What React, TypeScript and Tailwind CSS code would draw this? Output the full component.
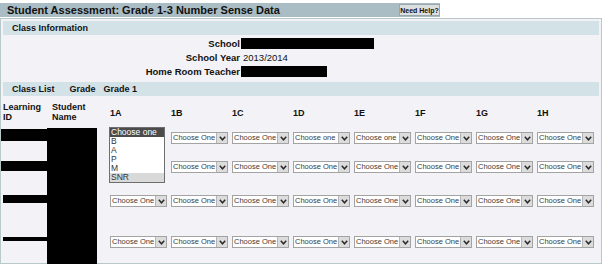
import React from "react";

const Chevron = () => (
  <svg width="7" height="5" viewBox="0 0 7 5" className="block">
    <path d="M0.8 0.8 L3.5 3.8 L6.2 0.8" fill="none" stroke="#2a2a2a" strokeWidth="1.5" />
  </svg>
);

const Select = ({ label = "Choose One" }: { label?: string }) => (
  <div className="flex h-[12px] w-[57px] border border-[#a3a3a3] bg-white text-[7.5px] leading-none text-[#3a3a3a]">
    <span className="flex flex-1 items-center whitespace-nowrap pl-[1px]">{label}</span>
    <span className="flex w-[11px] items-center justify-center border-l border-[#b5b5b5] bg-[#dcdcdc]">
      <Chevron />
    </span>
  </div>
);

const ListBox = () => (
  <div className="absolute left-[-1px] top-[-1px] z-10 w-[56px] border border-[#6e6e6e] bg-white text-[8.5px] leading-[9px] text-[#333]">
    <div className="h-[9px] bg-[#4b4b4b] pl-[1px] text-white">Choose one</div>
    <div className="h-[9px] pl-[1px]">B</div>
    <div className="h-[9px] pl-[1px]">A</div>
    <div className="h-[9px] pl-[1px]">P</div>
    <div className="h-[9px] pl-[1px]">M</div>
    <div className="h-[9px] bg-[#d9d9d9] pl-[1px]">SNR</div>
  </div>
);

const cols = ["1A", "1B", "1C", "1D", "1E", "1F", "1G", "1H"];

const rowLabels: string[][] = [
  ["", "Choose One", "Choose One", "Choose one", "Choose one", "Choose One", "Choose One", "Choose One"],
  ["", "Choose One", "Choose One", "Choose One", "Choose One", "Choose One", "Choose One", "Choose One"],
  cols.map(() => "Choose One"),
  cols.map(() => "Choose One"),
];

const idBlocks = [
  "ml-0 mt-[1px] h-[12px] w-[46px]",
  "ml-0 mt-[4px] h-[10px] w-[46px]",
  "ml-[2px] mt-[4px] h-[8px] w-[44px]",
  "ml-[2px] mt-[5px] h-[4px] w-[44px]",
];

export default function App() {
  return (
    <div className="h-[268px] w-[605px] overflow-hidden bg-white pt-[3px] font-['Liberation_Sans',Arial,sans-serif] text-[#111]">
      <div className="flex h-[14px] w-[440px] items-center justify-between bg-[#aabcc4] pl-[7px]">
        <span className="text-[11px] font-bold leading-none">Student Assessment: Grade 1-3 Number Sense Data</span>
        <span className="flex h-[12px] w-[41px] items-center justify-center whitespace-nowrap border border-[#9aa8ad] bg-[#dcdfe0] text-[7px] font-bold leading-none">
          Need Help?
        </span>
      </div>
      <div className="mt-[1px] h-[246px] w-[602px] border border-[#b9c8c8] bg-[#f3f2f6] pt-[2px]">
        <div className="mx-[2px] flex h-[14px] items-center bg-[#d3e2e7] pl-[9px] text-[9px] font-bold leading-none">
          Class Information
        </div>
        <div className="flex flex-col gap-[3px] pt-[3px] text-[9.5px] leading-[11px]">
          <div className="flex items-center">
            <span className="w-[239px] text-right font-bold">School</span>
            <span className="ml-[1px] h-[11px] w-[133px] bg-black" />
          </div>
          <div className="flex items-center">
            <span className="w-[239px] text-right font-bold">School Year</span>
            <span className="ml-[3px]">2013/2014</span>
          </div>
          <div className="flex items-center">
            <span className="w-[239px] text-right font-bold">Home Room Teacher</span>
            <span className="ml-[1px] h-[11px] w-[86px] bg-black" />
          </div>
        </div>
        <div className="mx-[2px] mt-[5px] flex h-[14px] items-center bg-[#d3e2e7] text-[9px] font-bold leading-none">
          <span className="ml-[9px]">Class List</span>
          <span className="ml-[15px]">Grade</span>
          <span className="ml-[8px]">Grade 1</span>
        </div>
        <div className="grid grid-cols-[46px_63px_repeat(8,61px)] grid-rows-[32px_29px_34px_41px_32px] text-[9px] font-bold leading-[10px]">
          <div className="flex items-center pl-[2px]">
            Learning
            <br />
            ID
          </div>
          <div className="flex items-center pl-[5px]">
            Student
            <br />
            Name
          </div>
          {cols.map((c) => (
            <div key={c} className="flex items-center pt-[2px]">
              {c}
            </div>
          ))}
          <div className="col-start-2 row-span-4 row-start-2 h-[136px] w-[50px] bg-black" />
          {rowLabels.map((labels, r) => (
            <React.Fragment key={r}>
              <div style={{ gridColumnStart: 1, gridRowStart: r + 2 }}>
                <div className={`${idBlocks[r]} bg-black`} />
              </div>
              {labels.map((l, i) => (
                <div key={i} className="relative pt-[4px] font-normal" style={{ gridColumnStart: i + 3, gridRowStart: r + 2 }}>
                  {r === 0 && i === 0 ? <ListBox /> : l ? <Select label={l} /> : null}
                </div>
              ))}
            </React.Fragment>
          ))}
        </div>
      </div>
    </div>
  );
}
